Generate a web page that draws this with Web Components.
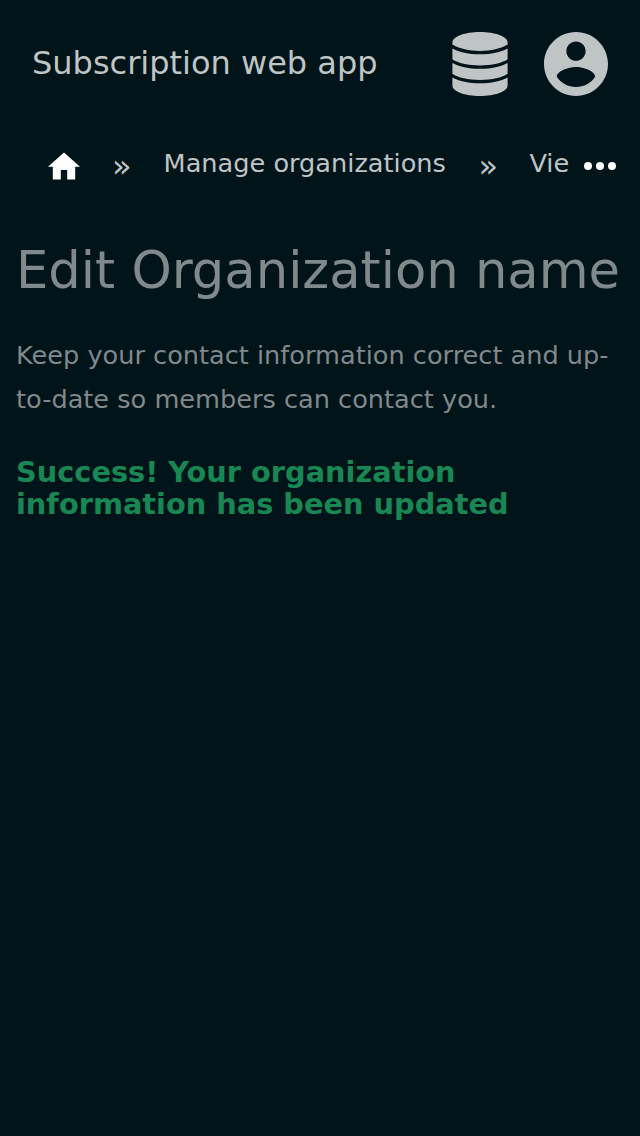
<!DOCTYPE html>
<html lang="en">
<head>
<meta charset="utf-8">
<title>Subscription web app</title>
<style>
body{margin:0;background:#001419;font-family:"DejaVu Sans",sans-serif;color:#bfc4c5}
</style>
</head>
<body>
<subscription-page></subscription-page>
<script>
const define = (name, html) => {
  const template = document.createElement('template');
  template.innerHTML = html;
  customElements.define(name, class extends HTMLElement {
    constructor() {
      super();
      this.attachShadow({mode: 'open'}).append(template.content.cloneNode(true));
    }
  });
};

define('icon-database', `
<style>:host{display:block;width:56px;height:64px}svg{display:block}</style>
<svg width="56" height="64" viewBox="0 0 56 64" fill="currentColor">
<path d="M28 0C43 0 55.600 4.500 55.600 10.500V12.600C49 16.800 39 18.900 28 18.900S7 16.800 .4 12.600V10.500C.4 4.500 13 0 28 0Z"/>
<path d="M.4 16.500C7 20.300 17 22.300 28 22.300S49 20.300 55.600 16.500V27.300C50 31.200 40 33.400 28 33.400S6 31.200 .4 27.300Z"/>
<path d="M.4 31C7 34.900 17 36.800 28 36.800S49 34.900 55.600 31V41.800C50 45.700 40 47.900 28 47.900S6 45.700 .4 41.800Z"/>
<path d="M.4 45.500C7 49.300 17 51.300 28 51.300S49 49.300 55.600 45.500V53.500C55.600 59.500 43 64 28 64S.4 59.500 .4 53.500Z"/>
</svg>`);

define('icon-account', `
<style>:host{display:block;width:64px;height:64px}svg{display:block}</style>
<svg width="64" height="64" viewBox="2 2 20 20" fill="currentColor"><path d="M12 2C6.480 2 2 6.480 2 12s4.480 10 10 10 10-4.480 10-10S17.520 2 12 2zm0 3c1.660 0 3 1.340 3 3s-1.340 3-3 3-3-1.340-3-3 1.340-3 3-3zm0 14.200c-2.500 0-4.710-1.280-6-3.220.030-1.990 4-3.080 6-3.080 1.990 0 5.970 1.090 6 3.080-1.290 1.940-3.500 3.220-6 3.220z"/></svg>`);

define('icon-home', `
<style>:host{display:block;width:32px;height:28px;color:#fff}svg{display:block}</style>
<svg width="32" height="28" viewBox="2 3 20 17" fill="currentColor"><path d="M10 20v-6h4v6h5v-8h3L12 3 2 12h3v8z"/></svg>`);

define('icon-more', `
<style>:host{display:block;width:32px;height:8px;color:#fff}svg{display:block}</style>
<svg width="32" height="8" fill="currentColor"><circle cx="4" cy="4" r="4"/><circle cx="16" cy="4" r="4"/><circle cx="28" cy="4" r="4"/></svg>`);

define('app-header', `
<style>
:host{display:flex;align-items:center;height:128px;padding:0 32px;box-sizing:border-box}
.title{flex:1;font-size:32px;line-height:38px;white-space:nowrap;padding-bottom:3px}
.actions{display:flex;gap:36px}
</style>
<div class="title"><slot></slot></div>
<div class="actions"><icon-database></icon-database><icon-account></icon-account></div>`);

define('bread-crumbs', `
<style>
:host{display:flex;align-items:center;height:76px;padding:0 24px 0 48px;box-sizing:border-box}
.sep{width:20px;font-size:32px;line-height:36px;padding-bottom:1px}
.text{font-size:25.600px;line-height:32px;white-space:nowrap;padding-bottom:7px}
.sep.a{margin:0 31.600px 0 32px}.sep.b{margin:0 31px 0 32.500px}
.last{flex:1;min-width:0;overflow:hidden}
</style>
<icon-home></icon-home><div class="sep a">»</div>
<div class="text">Manage organizations</div><div class="sep b">»</div>
<div class="text last">Vie</div><icon-more></icon-more>`);

define('page-content', `
<style>
:host{display:block;padding:34px 16px 0;color:#80898c}
h1{margin:0;font-size:51.200px;line-height:64px;font-weight:400;white-space:nowrap}
p{margin:31px 0 0;font-size:25.600px;line-height:44px}
h2{margin:35px 0 0;font-size:28.800px;line-height:32px;font-weight:700;color:#198754}
</style>
<h1>Edit Organization name</h1>
<p>Keep your contact information correct and up-to-date so members can contact you.</p>
<h2>Success! Your organization information has been updated</h2>`);

define('subscription-page', `
<style>:host{display:block;min-height:1136px;overflow:hidden}</style>
<app-header>Subscription web app</app-header>
<bread-crumbs></bread-crumbs>
<page-content></page-content>`);
</script>
</body>
</html>
